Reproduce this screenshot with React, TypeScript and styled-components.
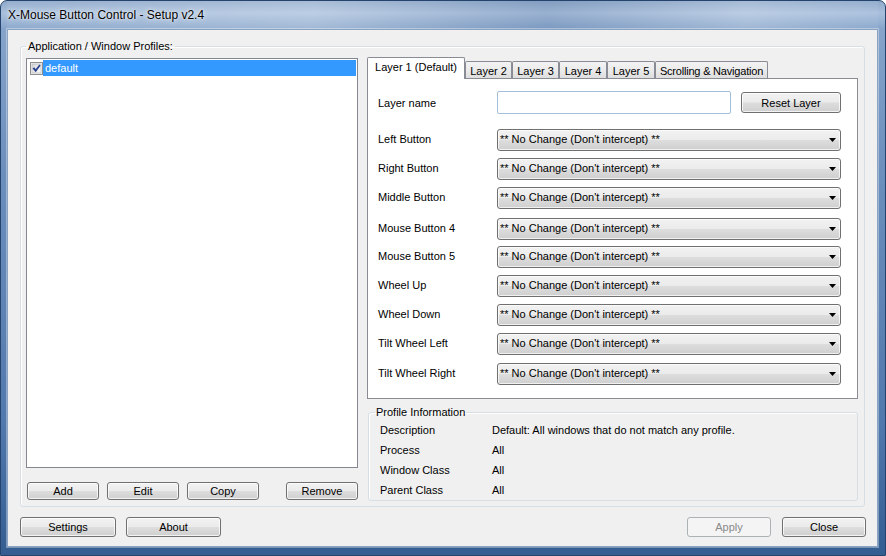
import React from "react";
import styled, { createGlobalStyle } from "styled-components";

const Global = createGlobalStyle`
  html, body { margin: 0; padding: 0; width: 886px; height: 556px; overflow: hidden; background: #ffffff; }
  body { font-family: "Liberation Sans", Arial, sans-serif; font-size: 11px; color: #000; }
  * { box-sizing: border-box; }
`;

const Window = styled.div`
  width: 886px;
  height: 556px;
  display: flex;
  flex-direction: column;
  border: 1px solid #24446e;
  border-radius: 7px 7px 0 0;
  padding: 0 7px 8px 6px;
  background: linear-gradient(
    180deg,
    #8fa9ca 0px,
    #a9c0dc 12px,
    #86a4ca 28px,
    #6d90bd 160px,
    #5279ad 420px,
    #345d92 100%
  );
`;

const TitleBar = styled.div`
  height: 28px;
  display: flex;
  align-items: center;
  padding-left: 1px;
  font-size: 12px;
  color: #000;
  text-shadow: 0 0 6px rgba(255, 255, 255, 0.9), 0 0 2px rgba(255, 255, 255, 0.8);
  background: linear-gradient(
    90deg,
    rgba(255, 255, 255, 0.06) 0%,
    rgba(255, 255, 255, 0.22) 35%,
    rgba(40, 70, 120, 0.12) 62%,
    rgba(255, 255, 255, 0.2) 85%,
    rgba(255, 255, 255, 0.05) 100%
  );
`;

const Client = styled.div`
  flex: 1;
  display: flex;
  flex-direction: column;
  background: #f0f0f0;
  border: 1px solid #8aa3c2;
  box-shadow: 0 0 0 1px rgba(255, 255, 255, 0.35);
`;

const Group = styled.fieldset`
  margin: 10px 12px 0 12px;
  padding: 4px 6px 5px 5px;
  border: 1px solid #d5dfe5;
  border-radius: 3px;
  box-shadow: inset 1px 1px 0 #ffffff;
  min-width: 0;
`;

const Legend = styled.legend`
  padding: 0 2px;
  margin: 0;
  line-height: 13px;
  font-size: 11px;
  color: #000;
`;

const MainGrid = styled.div`
  display: grid;
  grid-template-columns: 332px 491px;
  column-gap: 9px;
  align-items: start;
`;

const LeftCol = styled.div`
  display: flex;
  flex-direction: column;
  padding-top: 1px;
`;

const ListBox = styled.div`
  height: 410px;
  border: 1px solid #828790;
  background: #ffffff;
  padding: 1px;
`;

const ListRow = styled.div`
  display: flex;
  align-items: center;
  height: 16px;
  padding-left: 2px;
`;

const RowHighlight = styled.div<{ $selected?: boolean }>`
  flex: 1;
  height: 16px;
  line-height: 16px;
  padding-left: 2px;
  background: ${(p) => (p.$selected ? "#3399ff" : "transparent")};
  color: ${(p) => (p.$selected ? "#ffffff" : "#000000")};
`;

const ButtonRow = styled.div`
  display: flex;
  gap: 8px;
  margin-top: 14px;
  padding-left: 1px;
`;

const Button = styled.button<{ $w: number; $h?: number; $push?: boolean }>`
  width: ${(p) => p.$w}px;
  height: ${(p) => p.$h ?? 18}px;
  margin-left: ${(p) => (p.$push ? "auto" : "0")};
  padding: 0;
  font-family: inherit;
  font-size: 11px;
  color: #000;
  border: 1px solid #707070;
  border-radius: 3px;
  background: linear-gradient(180deg, #f2f2f2 0%, #ebebeb 48%, #dddddd 52%, #cfcfcf 100%);
  box-shadow: inset 0 0 0 1px rgba(255, 255, 255, 0.75);
  &:disabled {
    color: #8a8a8a;
    border-color: #adb2b5;
    background: #f4f4f4;
    box-shadow: none;
  }
`;

const RightCol = styled.div`
  display: flex;
  flex-direction: column;
`;

const TabStrip = styled.div`
  display: flex;
  align-items: flex-end;
  height: 22px;
  margin-bottom: -1px;
  position: relative;
  z-index: 1;
`;

const Tab = styled.div<{ $w: number; $active?: boolean }>`
  width: ${(p) => p.$w}px;
  height: ${(p) => (p.$active ? 22 : 17)}px;
  margin-bottom: ${(p) => (p.$active ? 0 : 1)}px;
  display: flex;
  justify-content: center;
  align-items: ${(p) => (p.$active ? "flex-start" : "center")};
  padding-top: ${(p) => (p.$active ? 3 : 1)}px;
  border: 1px solid #898c95;
  border-bottom: none;
  border-radius: 2px 2px 0 0;
  white-space: nowrap;
  letter-spacing: ${(p) => (p.$w > 100 ? "-0.2px" : "0")};
  background: ${(p) =>
    p.$active ? "#ffffff" : "linear-gradient(180deg, #f3f3f3 0%, #ebebeb 50%, #dedede 100%)"};
`;

const Panel = styled.div`
  background: #ffffff;
  border: 1px solid #898c95;
  padding: 12px 16px 13px 10px;
`;

const LayerRow = styled.div`
  display: grid;
  grid-template-columns: 119px 234px 1fr;
  align-items: center;
  height: 23px;
`;

const TextInput = styled.div`
  height: 23px;
  border: 1px solid #a3bfdb;
  border-radius: 2px;
  background: #ffffff;
`;

const ResetWrap = styled.div`
  display: flex;
  justify-content: flex-end;
`;

const ComboRow = styled.div<{ $mt: number }>`
  display: grid;
  grid-template-columns: 119px 1fr;
  align-items: center;
  height: 22px;
  margin-top: ${(p) => p.$mt}px;
  line-height: 13px;
`;

const RowLabel = styled.span`
  margin-top: -2px;
`;

const Combo = styled.div`
  height: 22px;
  display: flex;
  align-items: center;
  justify-content: space-between;
  padding: 0 4px 0 2px;
  border: 1px solid #707070;
  border-radius: 3px;
  background: linear-gradient(180deg, #f2f2f2 0%, #ebebeb 48%, #dddddd 52%, #cfcfcf 100%);
  box-shadow: inset 0 0 0 1px rgba(255, 255, 255, 0.7);
  white-space: nowrap;
`;

const ComboText = styled.span`
  margin-top: -2px;
`;

const InfoGroup = styled.fieldset`
  margin: 7px 0 0 1px;
  padding: 1px 0 0 6px;
  border: 1px solid #d5dfe5;
  border-radius: 3px;
  box-shadow: inset 1px 1px 0 #ffffff;
  min-width: 0;
`;

const InfoLegend = styled.legend`
  padding: 0 1px;
  margin: 0;
  line-height: 13px;
  font-size: 11px;
`;

const InfoRow = styled.div`
  display: grid;
  grid-template-columns: 112px 1fr;
  height: 20px;
  line-height: 20px;
  padding-left: 5px;
`;

const BottomBar = styled.div`
  display: flex;
  align-items: center;
  gap: 10px;
  margin-top: 10px;
  padding: 0 11px 0 12px;
`;

const Spacer = styled.div`
  flex: 1;
`;

const CheckBox = () => (
  <svg width="13" height="13" viewBox="0 0 13 13" style={{ flex: "none" }}>
    <defs>
      <linearGradient id="cbg" x1="0" y1="0" x2="1" y2="1">
        <stop offset="0" stopColor="#d8d8d8" />
        <stop offset="1" stopColor="#fbfbfb" />
      </linearGradient>
    </defs>
    <rect x="0.5" y="0.5" width="12" height="12" fill="#f4f4f4" stroke="#8e8f8f" />
    <rect x="2" y="2" width="9" height="9" fill="url(#cbg)" stroke="#b2b2b2" strokeWidth="0.6" />
    <path d="M2.6 6.4 L4.2 5.2 L5.6 7.3 L9.4 2.4 L10.6 3.5 L5.7 10.2 Z" fill="#253f8c" />
  </svg>
);

const Arrow = () => (
  <svg width="7" height="4" viewBox="0 0 7 4">
    <path d="M0 0 H7 L3.5 4 Z" fill="#000" />
  </svg>
);

const tabs = [
  { label: "Layer 1 (Default)", w: 98, active: true },
  { label: "Layer 2", w: 47 },
  { label: "Layer 3", w: 47 },
  { label: "Layer 4", w: 48 },
  { label: "Layer 5", w: 48 },
  { label: "Scrolling & Navigation", w: 113 },
];

const combos = [
  { label: "Left Button", mt: 15 },
  { label: "Right Button", mt: 7 },
  { label: "Middle Button", mt: 7 },
  { label: "Mouse Button 4", mt: 9 },
  { label: "Mouse Button 5", mt: 6 },
  { label: "Wheel Up", mt: 7 },
  { label: "Wheel Down", mt: 7 },
  { label: "Tilt Wheel Left", mt: 7 },
  { label: "Tilt Wheel Right", mt: 8 },
];

const info = [
  ["Description", "Default: All windows that do not match any profile."],
  ["Process", "All"],
  ["Window Class", "All"],
  ["Parent Class", "All"],
];

export default function App() {
  return (
    <>
      <Global />
      <Window>
        <TitleBar>X-Mouse Button Control - Setup v2.4</TitleBar>
        <Client>
          <Group>
            <Legend>Application / Window Profiles:</Legend>
            <MainGrid>
              <LeftCol>
                <ListBox>
                  <ListRow>
                    <CheckBox />
                    <RowHighlight $selected>default</RowHighlight>
                  </ListRow>
                </ListBox>
                <ButtonRow>
                  <Button $w={72}>Add</Button>
                  <Button $w={72}>Edit</Button>
                  <Button $w={72}>Copy</Button>
                  <Button $w={72} $push>
                    Remove
                  </Button>
                </ButtonRow>
              </LeftCol>
              <RightCol>
                <TabStrip>
                  {tabs.map((t) => (
                    <Tab key={t.label} $w={t.w} $active={t.active}>
                      {t.label}
                    </Tab>
                  ))}
                </TabStrip>
                <Panel>
                  <LayerRow>
                    <span>Layer name</span>
                    <TextInput />
                    <ResetWrap>
                      <Button $w={100} $h={21}>
                        Reset Layer
                      </Button>
                    </ResetWrap>
                  </LayerRow>
                  {combos.map((c) => (
                    <ComboRow key={c.label} $mt={c.mt}>
                      <RowLabel>{c.label}</RowLabel>
                      <Combo>
                        <ComboText>** No Change (Don't intercept) **</ComboText>
                        <Arrow />
                      </Combo>
                    </ComboRow>
                  ))}
                </Panel>
                <InfoGroup>
                  <InfoLegend>Profile Information</InfoLegend>
                  {info.map(([k, v]) => (
                    <InfoRow key={k}>
                      <span>{k}</span>
                      <span>{v}</span>
                    </InfoRow>
                  ))}
                </InfoGroup>
              </RightCol>
            </MainGrid>
          </Group>
          <BottomBar>
            <Button $w={96} $h={20}>
              Settings
            </Button>
            <Button $w={95} $h={20}>
              About
            </Button>
            <Spacer />
            <Button $w={84} $h={20} disabled>
              Apply
            </Button>
            <Button $w={84} $h={20} style={{ marginLeft: 1 }}>
              Close
            </Button>
          </BottomBar>
        </Client>
      </Window>
    </>
  );
}
